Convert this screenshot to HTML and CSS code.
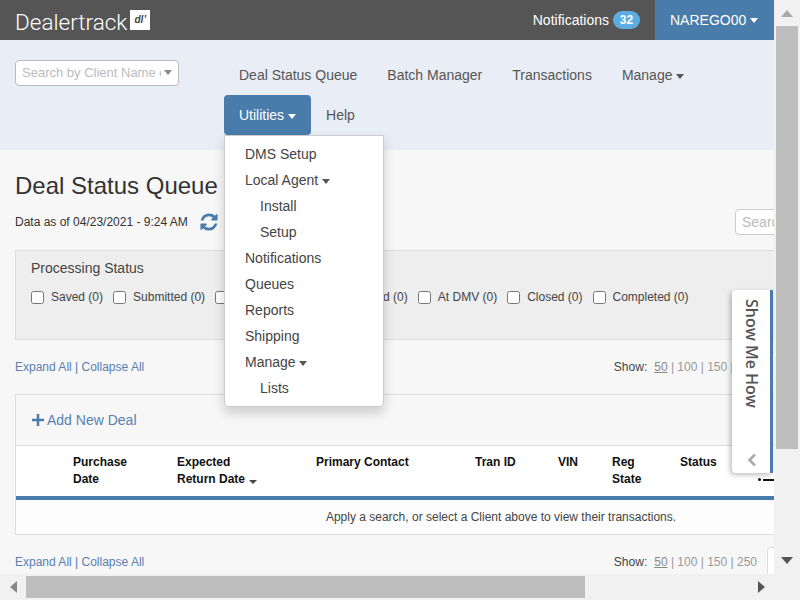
FILE: index.html
```html
<!DOCTYPE html>
<html>
<head>
    <title>Deal Status Queue</title>
    <link rel="stylesheet" href="styles.css">
</head>
<body>
<div class="window">
    <div class="viewport">
        <header class="topbar">
            <div class="logo">Dealertrack<span class="logo-mark">dl&#8217;</span></div>
            <div class="topbar-right">
                <a class="notes">Notifications <span class="badge">32</span></a>
                <a class="user">NAREGO00 <i class="caret"></i></a>
            </div>
        </header>

        <div class="subnav">
            <div class="client-search">
                <span class="client-text">Search by Client Name or</span>
                <i class="caret caret-grey"></i>
            </div>
            <nav class="nav">
                <a>Deal Status Queue</a>
                <a>Batch Manager</a>
                <a>Transactions</a>
                <a>Manage <i class="caret caret-dark"></i></a>
                <a class="active">Utilities <i class="caret"></i></a>
                <a>Help</a>
            </nav>
        </div>

        <ul class="menu">
            <li>DMS Setup</li>
            <li>Local Agent <i class="caret caret-dark"></i></li>
            <li class="sub">Install</li>
            <li class="sub">Setup</li>
            <li>Notifications</li>
            <li>Queues</li>
            <li>Reports</li>
            <li>Shipping</li>
            <li>Manage <i class="caret caret-dark"></i></li>
            <li class="sub">Lists</li>
        </ul>

        <main class="content">
            <h1>Deal Status Queue</h1>
            <div class="data-row">
                <span class="data-date">Data as of 04/23/2021 - 9:24 AM</span>
                <svg class="refresh" viewBox="0 0 1792 1792"><path d="M1639 1056q0 5-1 7-64 268-268 434.5t-478 166.500q-146 0-282.500-55t-243.500-157l-129 129q-19 19-45 19t-45-19-19-45v-448q0-26 19-45t45-19h448q26 0 45 19t19 45-19 45l-137 137q71 66 161 102t187 36q134 0 250-65t186-179q11-17 53-117 8-23 30-23h192q13 0 22.500 9.500t9.500 22.500zm25-800v448q0 26-19 45t-45 19h-448q-26 0-45-19t-19-45 19-45l138-138q-148-137-349-137-134 0-250 65t-186 179q-11 17-53 117-8 23-30 23h-199q-13 0-22.500-9.500t-9.500-22.500v-7q65-268 270-434.500t480-166.500q146 0 284 55.500t245 156.500l130-129q19-19 45-19t45 19 19 45z"/></svg>
                <div class="table-search">Search</div>
            </div>

            <section class="status-panel">
                <div class="status-title">Processing Status</div>
                <div class="status-list">
                    <label><input type="checkbox">Saved (0)</label>
                    <label><input type="checkbox">Submitted (0)</label>
                    <label><input type="checkbox">Received (0)</label>
                    <label><input type="checkbox">Processed (0)</label>
                    <label><input type="checkbox">At DMV (0)</label>
                    <label><input type="checkbox">Closed (0)</label>
                    <label><input type="checkbox">Completed (0)</label>
                </div>
            </section>

            <div class="pager-row">
                <div class="links"><a>Expand All</a> | <a>Collapse All</a></div>
                <div class="pager">
                    <span class="show">Show:</span>
                    <span class="sizes"><u>50</u> | 100 | 150 | 250</span>
                    <span class="page-box"></span>
                </div>
            </div>

            <section class="deals">
                <div class="deals-top">
                    <a class="add-deal"><svg class="plus" viewBox="0 0 12 12"><path d="M0 4.750h4.750V0h2.500v4.750H12v2.500H7.250V12h-2.500V7.250H0z"/></svg>Add New Deal</a>
                </div>
                <table>
                    <thead>
                        <tr>
                            <th class="c-blank"></th>
                            <th class="c-date">Purchase<br>Date</th>
                            <th class="c-return">Expected<br>Return Date <i class="caret caret-small"></i></th>
                            <th class="c-contact">Primary Contact</th>
                            <th class="c-tran">Tran ID</th>
                            <th class="c-vin">VIN</th>
                            <th class="c-reg">Reg<br>State</th>
                            <th class="c-status">Status</th>
                            <th class="c-tools"><br><span class="tools-icon"><b></b><s></s></span></th>
                        </tr>
                    </thead>
                    <tbody>
                        <tr><td colspan="9">Apply a search, or select a Client above to view their transactions.</td></tr>
                    </tbody>
                </table>
            </section>

            <div class="pager-row">
                <div class="links"><a>Expand All</a> | <a>Collapse All</a></div>
                <div class="pager">
                    <span class="show">Show:</span>
                    <span class="sizes"><u>50</u> | 100 | 150 | 250</span>
                    <span class="page-box"></span>
                </div>
            </div>
        </main>

        <aside class="howto">
            <span class="howto-text">Show Me How</span>
            <svg class="howto-arrow" viewBox="0 0 10 14"><path d="M8 1.500 2.500 7 8 12.500" fill="none" stroke="#aaa" stroke-width="2.500"/></svg>
        </aside>
    </div>

    <div class="vscroll">
        <i class="arrow arrow-up"></i>
        <div class="vthumb"></div>
        <i class="arrow arrow-down"></i>
    </div>
    <div class="hscroll">
        <i class="arrow arrow-left"></i>
        <div class="hthumb"></div>
        <i class="arrow arrow-right"></i>
    </div>
    <div class="corner"></div>
</div>
</body>
</html>
```

FILE: styles.css
```css
html, body {
    margin: 0;
    height: 100%;
    overflow: hidden;
}

body {
    font-family: "Liberation Sans", Arial, sans-serif;
    font-size: 12px;
    color: #333;
    background-color: #f7f7f7;
}

.window {
    display: grid;
    grid-template-columns: 774px 26px;
    grid-template-rows: 574px 26px;
    height: 600px;
}

.viewport {
    position: relative;
    overflow: hidden;
    background-color: #f7f7f7;
}

/* top bar */
.topbar {
    display: flex;
    justify-content: space-between;
    height: 40px;
    background-color: #555;
    color: white;
}

.logo {
    display: flex;
    align-items: flex-start;
    width: 160px;
    padding: 8px 0 0 15px;
    box-sizing: border-box;
    font-family: Roboto, "Liberation Sans", sans-serif;
    font-size: 22.500px;
    line-height: 28px;
    font-weight: 300;
}

.logo-mark {
    width: 20px;
    height: 20px;
    margin: 2px 0 0 3px;
    background-color: white;
    color: #444;
    font-family: "Liberation Sans", Arial, sans-serif;
    font-size: 10px;
    line-height: 19px;
    font-weight: bold;
    font-style: italic;
    text-align: center;
}

.topbar-right {
    display: flex;
    align-items: stretch;
    font-size: 14px;
}

.notes {
    display: flex;
    align-items: center;
    gap: 4px;
    padding-right: 15px;
}

.badge {
    width: 27px;
    height: 18px;
    border-radius: 9px;
    background-color: #5dade2;
    font-size: 12px;
    font-weight: bold;
    line-height: 18px;
    text-align: center;
}

.user {
    display: flex;
    align-items: center;
    gap: 4px;
    width: 119px;
    padding-left: 15px;
    box-sizing: border-box;
    background-color: #4a7cab;
}

.caret {
    display: inline-block;
    width: 0;
    height: 0;
    border-top: 5px solid white;
    border-left: 4.500px solid transparent;
    border-right: 4.500px solid transparent;
    vertical-align: 1px;
}

.caret-dark { border-top-color: #555; }
.caret-grey { border-top-color: #888; }

.caret-small {
    border-top: 4px solid #444;
    border-left-width: 4px;
    border-right-width: 4px;
    vertical-align: -1px;
    margin-left: 1px;
}

/* sub nav */
.subnav {
    display: flex;
    height: 110px;
    background-color: #e9eef6;
}

.client-search {
    display: flex;
    align-items: center;
    justify-content: space-between;
    width: 164px;
    height: 26px;
    margin: 20px 0 0 15px;
    padding: 0 6px 2px 6px;
    box-sizing: border-box;
    border: 1px solid #bbb;
    border-radius: 4px;
    background-color: white;
    color: #bbb;
    font-size: 13px;
}

.client-text {
    width: 139px;
    overflow: hidden;
    white-space: nowrap;
}

.nav {
    display: flex;
    flex-wrap: wrap;
    align-content: flex-start;
    flex: 1;
    margin: 15px 0 0 45px;
    font-size: 14px;
    color: #555;
}

.nav a {
    height: 40px;
    padding: 0 15px;
    line-height: 40px;
    border-radius: 4px;
}

.nav .active {
    background-color: #4a7cab;
    color: white;
}

/* utilities dropdown */
.menu {
    position: absolute;
    top: 135px;
    left: 224px;
    z-index: 5;
    width: 160px;
    margin: 0;
    padding: 5px 0;
    box-sizing: border-box;
    list-style: none;
    background-color: white;
    border: 1px solid #ccc;
    border-radius: 0 0 4px 4px;
    box-shadow: 0 6px 12px rgba(0, 0, 0, 0.175);
    font-size: 14px;
    color: #444;
}

.menu li {
    height: 26px;
    padding-left: 20px;
    line-height: 26px;
}

.menu .sub { padding-left: 35px; }

/* page content */
.content {
    width: 1000px;
    padding: 0 15px;
    box-sizing: border-box;
}

h1 {
    margin: 22px 0 0;
    font-size: 24px;
    line-height: 28px;
    font-weight: normal;
}

.data-row {
    display: flex;
    align-items: center;
    height: 26px;
    margin-top: 9px;
}

.data-date { width: 184px; }

.refresh {
    width: 20px;
    height: 20px;
    fill: #4a7cab;
}

.table-search {
    width: 100px;
    height: 26px;
    margin-left: 516px;
    padding-left: 6px;
    box-sizing: border-box;
    border: 1px solid #ccc;
    border-radius: 4px;
    background-color: white;
    color: #bbb;
    font-size: 14px;
    line-height: 24px;
}

.status-panel {
    height: 90px;
    margin-top: 15px;
    padding: 9px 15px;
    box-sizing: border-box;
    border: 1px solid #ddd;
    background-color: #eee;
}

.status-title {
    font-size: 14px;
    line-height: 16px;
    color: #444;
}

.status-list {
    display: flex;
    gap: 10px;
    margin-top: 13px;
    color: #444;
}

.status-list label {
    display: flex;
    align-items: center;
    height: 16px;
}

.status-list input {
    width: 13px;
    height: 13px;
    margin: 0 7px 0 0;
}

.pager-row {
    display: flex;
    justify-content: space-between;
    align-items: center;
    height: 30px;
    margin-top: 12px;
}

.links {
    color: #4a7cab;
}

.links a { color: #5a7fb0; }

.pager {
    display: flex;
    align-items: center;
    color: #444;
}

.sizes {
    margin-left: 7px;
    color: #999;
}

.sizes u { color: #888; }

.page-box {
    width: 218px;
    height: 30px;
    margin-left: 10px;
    box-sizing: border-box;
    border: 1px solid #ddd;
    border-radius: 4px;
    background-color: white;
}

.deals {
    height: 141px;
    margin-top: 12px;
    box-sizing: border-box;
    border: 1px solid #ddd;
    background-color: #fdfdfd;
}

.deals-top {
    display: flex;
    align-items: center;
    height: 50px;
    padding-left: 16px;
    border-bottom: 1px solid #ddd;
    background-color: #f7f7f7;
}

.add-deal {
    display: flex;
    align-items: center;
    font-size: 14px;
    color: #5a7fb0;
}

.plus {
    width: 12px;
    height: 12px;
    margin-right: 3px;
    fill: #4a7cab;
}

table {
    width: 100%;
    table-layout: fixed;
    border-collapse: separate;
    border-spacing: 0;
}

th {
    height: 54px;
    padding: 8px 0 0;
    box-sizing: border-box;
    vertical-align: top;
    text-align: left;
    line-height: 17px;
    color: #111;
    background-color: white;
    border-bottom: 4px solid #4a7cab;
}

td {
    height: 34px;
    padding: 0 0 0 2px;
    text-align: center;
    color: #444;
}

.c-blank { width: 57px; }
.c-date { width: 104px; }
.c-return { width: 139px; }
.c-contact { width: 159px; }
.c-tran { width: 83px; }
.c-vin { width: 54px; }
.c-reg { width: 68px; }
.c-status { width: 78px; }

.tools-icon {
    display: flex;
    align-items: center;
    gap: 2px;
    height: 17px;
}

.tools-icon b {
    width: 3px;
    height: 3px;
    border-radius: 2px;
    background-color: #111;
}

.tools-icon s {
    width: 30px;
    height: 2px;
    background-color: #111;
}

/* show me how tab */
.howto {
    position: absolute;
    top: 290px;
    right: 1px;
    z-index: 4;
    display: flex;
    flex-direction: column;
    align-items: center;
    width: 41px;
    height: 183px;
    padding: 9px 0 0 2px;
    box-sizing: border-box;
    background-color: white;
    border-right: 3px solid #4a7cab;
    border-radius: 4px 0 0 4px;
    box-shadow: -2px 2px 5px rgba(0, 0, 0, 0.25);
}

.howto-text {
    writing-mode: vertical-rl;
    font-family: "Open Sans", sans-serif;
    font-size: 16px;
    font-weight: 600;
    color: #555;
}

.howto-arrow {
    width: 10px;
    height: 14px;
    margin-top: auto;
    margin-bottom: 6px;
}

/* scrollbars */
.vscroll, .hscroll, .corner { background-color: #f1f1f1; }

.vscroll {
    display: flex;
    flex-direction: column;
    align-items: center;
    padding: 0 2px;
}

.vthumb {
    width: 22px;
    height: 423px;
    background-color: #bdbdbd;
}

.hscroll {
    position: relative;
    display: flex;
    align-items: center;
    padding-left: 26px;
}

.hthumb {
    width: 559px;
    height: 22px;
    background-color: #bdbdbd;
}

.arrow {
    display: block;
    width: 0;
    height: 0;
}

.arrow-up {
    margin: 10px 0 9px;
    border-bottom: 7px solid #aaa;
    border-left: 6px solid transparent;
    border-right: 6px solid transparent;
}

.arrow-down {
    margin-top: 108px;
    border-top: 7px solid #555;
    border-left: 6px solid transparent;
    border-right: 6px solid transparent;
}

.arrow-left {
    position: absolute;
    left: 10px;
    top: 7px;
    border-right: 7px solid #888;
    border-top: 6px solid transparent;
    border-bottom: 6px solid transparent;
}

.arrow-right {
    position: absolute;
    left: 758px;
    top: 7px;
    border-left: 7px solid #555;
    border-top: 6px solid transparent;
    border-bottom: 6px solid transparent;
}
```
